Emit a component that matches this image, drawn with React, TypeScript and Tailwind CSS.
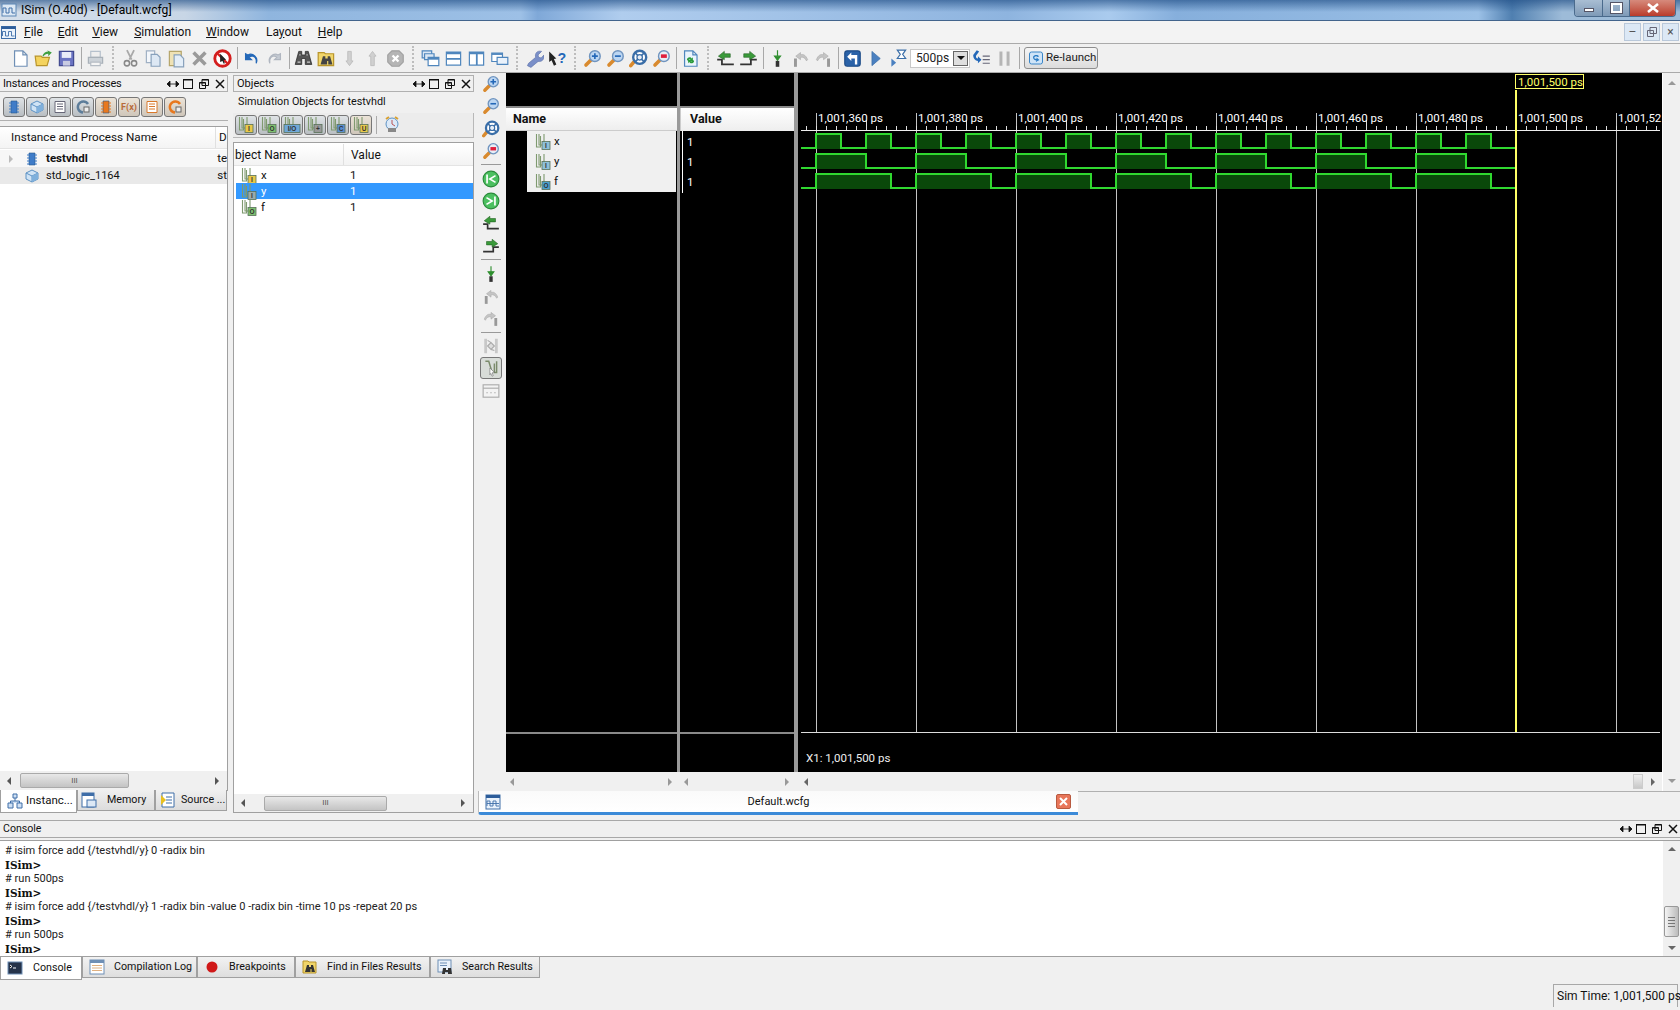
import React from "react";

const FONT = "Roboto, sans-serif";

const Svg = ({ children, w = 16, h = 16 }: { children: React.ReactNode; w?: number; h?: number }) => (
  <svg width={w} height={h} viewBox={`0 0 ${w} ${h}`} className="shrink-0 block">{children}</svg>
);

const Doc = ({ s = "#6f8fb5", f = "#fff" }: { s?: string; f?: string }) => <path d="M3 1.500h7l3.500 3.500v9.500H3z M10 1.500V5h3.500" fill={f} stroke={s} />;
const Lens = ({ mark, lens = "#bcd6f2" }: { mark?: React.ReactNode; lens?: string }) => (
  <Svg>
    <path d="M6.500 9.500L2.500 13.500" stroke="#d98a2e" strokeWidth="3" strokeLinecap="round" />
    <circle cx="10" cy="6" r="4.500" fill={lens} stroke="#6f94bf" strokeWidth="1.200" />
    {mark}
  </Svg>
);
const Buoy = () => (
  <Svg>
    <path d="M4 11l-2.500 3" stroke="#d98a2e" strokeWidth="3" strokeLinecap="round" />
    <circle cx="9" cy="7" r="5.500" fill="#fff" stroke="#3a6ea8" strokeWidth="2" />
    <circle cx="9" cy="7" r="2.300" fill="#e8eef6" stroke="#3a6ea8" />
    <path d="M5 3l2.500 2.500M13 3l-2.500 2.500M5 11l2.500-2.500M13 11l-2.500-2.500" stroke="#3a6ea8" strokeWidth="1.400" />
  </Svg>
);
const Arrow = ({ up }: { up?: boolean }) => (
  <Svg><path d={up ? "M8 2l3 4H9.500v8h-3V6H5z" : "M8 14l3-4H9.500V2h-3v8H5z"} fill="#d0d0d0" stroke="#b5b5b5" strokeWidth=".6" /></Svg>
);
const Win = ({ d }: { d: string }) => (
  <Svg><path d="M2 2.500h12v11H2z" fill="#fff" stroke="#4f86bd" /><path d={d} fill="#4f86bd" /></Svg>
);
const Step = ({ flip }: { flip?: boolean }) => (
  <Svg>
    <path d={flip ? "M1 13h9V9h5" : "M1 9h4v4h10"} fill="none" stroke="#333" strokeWidth="1.500" />
    <path d={flip ? "M14 6L9 2v2H4v3h5v2z" : "M2 6l5-4v2h5v3H7v2z"} fill="#3a9a3a" stroke="#206020" strokeWidth=".5" />
  </Svg>
);
const GrayArc = ({ flip }: { flip?: boolean }) => (
  <Svg>
    <g transform={flip ? "translate(16 0) scale(-1 1)" : undefined}>
      <path d="M2.500 8h2.500v7H2.500z" fill="#999" />
      <path d="M14 9C12.500 5 10 4 8 5V3L4 6l4 3V7c2-.5 4 .5 5 3z" fill="#c4c4c4" stroke="#aaa" strokeWidth=".5" />
    </g>
  </Svg>
);
const Binoc = () => (
  <Svg>
    <path d="M4 2h2.500v3h3V2H12l3 11h-5.500V8h-3v5H1z" fill="#555" stroke="#222" strokeWidth=".6" />
    <path d="M3 11h2.500M11 11h2.500M4.500 5h1M10.500 5h1" stroke="#ccc" />
  </Svg>
);
const Wrench = () => (
  <Svg><path d="M2 14l1-2 6-5c-1-3 1-6 5-5l-3 3 .5 2 2 .5 2.500-2.500c.5 4-2 6-5 5.500l-6 5z" fill="#7a8fc8" stroke="#5c70a8" strokeWidth=".5" /></Svg>
);

const SigIcon = ({ l, c, t = "#333", wide }: { l: string; c: string; t?: string; wide?: boolean }) => (
  <svg width="18" height="18" viewBox="0 0 18 18" className="shrink-0 block">
    <path d="M2.500 1v13h4V3M5 1v11h3M10 1v9" fill="none" stroke="#7f9a6f" strokeWidth="1.100" />
    <rect x={wide ? 1 : 8} y="8.500" width={wide ? 16 : 8} height="8" fill={c} stroke="#587058" strokeWidth=".8" />
    <text x={wide ? 9 : 12} y="15.200" textAnchor="middle" fontSize="6.500" fontWeight="700" fill={t} fontFamily="Liberation Sans, sans-serif">{l}</text>
  </svg>
);

const Tri = ({ dir, c = "#555" }: { dir: "l" | "r" | "u" | "d"; c?: string }) => {
  const d = { l: "M6 1v8L2 5z", r: "M3 1v8l4-4z", u: "M1 7h8L5 3z", d: "M1 3h8L5 7z" }[dir];
  return <svg width="10" height="10" viewBox="0 0 10 10" className="shrink-0 block"><path d={d} fill={c} /></svg>;
};

const WaveGlyph = () => (
  <Svg>
    <rect x="1" y="1" width="14" height="14" fill="#eaf2fb" stroke="#3f6ea8" />
    <rect x="1" y="1" width="14" height="3" fill="#2d5d9a" />
    <path d="M2 12V7h3v5h3V7h3v5h3M2 9.500h12" fill="none" stroke="#3f6ea8" strokeWidth=".9" />
  </Svg>
);

const Grip = () => (
  <div className="w-[12px] h-[24px] flex justify-center shrink-0">
    <div className="w-[2px] h-full border-l-2 border-dotted border-[#bdbdbd]" />
  </div>
);
const Sep = () => (
  <div className="w-[6px] h-[22px] flex justify-center shrink-0">
    <div className="w-px h-full bg-[#a8a8a8]" />
  </div>
);
const T = ({ children }: { children?: React.ReactNode }) => (
  <div className="w-[23px] h-[24px] flex items-center justify-center shrink-0 [&>svg]:w-[19px] [&>svg]:h-[19px]">{children}</div>
);

const Toolbar = () => (
  <div className="h-[28px] flex items-center pl-[9px] bg-[#f0f0f0] border-b border-[#aaaaaa] box-content">
    <T><Svg><Doc /></Svg></T>
    <T><Svg><path d="M1 6h5l1 1h6l-2 7H2z" fill="#f4d35e" stroke="#b8942a" /><path d="M7 6c1-3 3-4 5-4l-1-1 4 2-3 3V4c-2 0-3 1-4 2z" fill="#3f9e3f" /></Svg></T>
    <T><Svg><path d="M2 2h12v12H2z" fill="#6a73c2" stroke="#41498f" /><path d="M4 2.500h8v5H4z" fill="#e9ecf8" /><path d="M5 10h6v4H5z" fill="#c8cbe2" /></Svg></T>
    <Sep />
    <T><Svg><path d="M4 2h8v5H4z" fill="#eee" stroke="#b5c0cc" /><path d="M2 7h12v5H2z" fill="#ccd2d8" stroke="#a8b0b8" /><path d="M4 11h8v3H4z" fill="#f5f5f5" stroke="#b5bcc4" /></Svg></T>
    <Grip />
    <T><Svg><path d="M5 1l4 8M11 1L7 9" stroke="#a9a9a9" strokeWidth="1.500" /><circle cx="5" cy="12" r="2.200" fill="none" stroke="#888" strokeWidth="1.300" /><circle cx="11" cy="12" r="2.200" fill="none" stroke="#888" strokeWidth="1.300" /></Svg></T>
    <T><Svg><path d="M2 1.500h7v10H2z" fill="#f4f7fb" stroke="#9fb0c4" /><path d="M6 4.500h5l2.500 2.500v7.500H6z" fill="#dde8f4" stroke="#88a1bc" /></Svg></T>
    <T><Svg><path d="M2 2h10v12H2z" fill="#efe2b5" stroke="#b5a56a" /><path d="M6 5h5l3 3v7H6z" fill="#e4eef8" stroke="#88a1bc" /></Svg></T>
    <T><Svg><path d="M3 3l10 10M13 3L3 13" stroke="#9a9a9a" strokeWidth="3" /></Svg></T>
    <T><Svg><circle cx="8" cy="8" r="6.500" fill="#fff" stroke="#d41e1e" strokeWidth="2.400" /><path d="M4 4l8 8" stroke="#d41e1e" strokeWidth="2" /><path d="M6 4l5 5-2 .5 1 2.500-1 .5-1-2.500-2 1z" fill="#222" /></Svg></T>
    <Sep />
    <T><Svg><path d="M3 4v5h5L6 7c2-2 5-1 6 2v3c2-5-3-9-7-7z" fill="#2468b8" stroke="#2468b8" /></Svg></T>
    <T><Svg><path d="M13 4v5H8l2-2c-2-2-5-1-6 2v3c-2-5 3-9 7-7z" fill="#c4cad2" stroke="#b0b6c0" /></Svg></T>
    <Sep />
    <T><Binoc /></T>
    <T><Svg><path d="M1 3h5l1 1h7v10H1z" fill="#f0d56a" stroke="#b8942a" /><path d="M5 6h2v2h2V6h2l2 7h-3.500V10h-1v3H3z" fill="#444" /></Svg></T>
    <T><Arrow /></T>
    <T><Arrow up /></T>
    <T><Svg><path d="M5 1.500h6L14.500 5v6L11 14.500H5L1.500 11V5z" fill="#b5b5b5" stroke="#a0a0a0" /><path d="M5.500 5.500l5 5M10.500 5.500l-5 5" stroke="#fff" strokeWidth="2" /></Svg></T>
    <Grip />
    <T><Svg><path d="M1 1.500h8v6H1z" fill="#dbe7f4" stroke="#4f86bd" /><path d="M3 4h8v5H3z" fill="#dbe7f4" stroke="#4f86bd" /><path d="M6 7h9v7H6z" fill="#fff" stroke="#4f86bd" /><path d="M6 7h9v2H6z" fill="#4f86bd" /></Svg></T>
    <T><Win d="M2 7.500h12v1.500H2zM2 2.500h12v2H2z" /></T>
    <T><Win d="M7.500 2.500H9v11H7.500zM2 2.500h12v2H2z" /></T>
    <T><Svg><path d="M1.500 3.500h9v7h-9z" fill="#fff" stroke="#4f86bd" /><path d="M6 7h9v6H6z" fill="#eaf2fb" stroke="#4f86bd" /><path d="M1.500 3.500h9v1.500h-9z" fill="#4f86bd" /></Svg></T>
    <Grip />
    <T><Wrench /></T>
    <T><Svg><path d="M1 2l6 6-2 .5 2 4.500-2 1-2-4.500-2 1.500z" fill="#222" /><text x="8" y="12" fontSize="12" fontWeight="700" fill="#2468b8" fontFamily="Liberation Sans, sans-serif">?</text></Svg></T>
    <Grip />
    <T><Lens mark={<path d="M7.500 6h5M10 3.500v5" stroke="#2468b8" strokeWidth="1.400" />} /></T>
    <T><Lens mark={<path d="M7.500 6h5" stroke="#2468b8" strokeWidth="1.400" />} /></T>
    <T><Buoy /></T>
    <T><Lens lens="#e8eef6" mark={<path d="M7.500 4.500h5v3h-5z" fill="#e01e3c" />} /></T>
    <Sep />
    <T><Svg><Doc s="#4f86bd" f="#eaf4fc" /><path d="M5 9c0-2 3-3 4-1l1-1v3H7l1-1c-.5-.8-2-.4-2 1zM11 10c0 2-3 3-4 1l-1 1V9h3l-1 1c.5.8 2 .4 2-1z" fill="#2a9a3a" /></Svg></T>
    <Grip />
    <T><Step /></T>
    <T><Step flip /></T>
    <Sep />
    <T><Svg><path d="M8 1v5h2.500L8 9.500 5.500 6H8z" fill="#2f8f2f" stroke="#2f8f2f" /><path d="M6.500 10h3v5h-3z" fill="#333" /></Svg></T>
    <T><GrayArc /></T>
    <T><GrayArc flip /></T>
    <Sep />
    <T><Svg><rect x="1.500" y="1.500" width="13" height="13" rx="2" fill="#2a62a8" stroke="#1f4d88" /><path d="M11 5H7V3L3.500 6.500 7 10V8h3v5h2V5z" fill="#fff" /></Svg></T>
    <T><Svg><path d="M5 2l7 6-7 6z" fill="#4a80c0" stroke="#3a6ea8" strokeWidth=".6" /></Svg></T>
    <T><Svg><path d="M2 8l4 3.500L2 15z" fill="#4a80c0" /><path d="M7 1h7l-2.500 3.500L14 8H7l2.500-3.500z" fill="#fff" stroke="#3a6ea8" /></Svg></T>
    <div className="w-[60px] h-[19px] bg-white border border-[#c8c8c8] flex items-center justify-between pl-[5px] pr-px shrink-0 text-[12px] text-[#222]">
      500ps
      <span className="w-[15px] h-[15px] bg-[#dedede] border border-[#666] flex items-center justify-center"><Tri dir="d" c="#111" /></span>
    </div>
    <T><Svg><path d="M4 1L1 5c0 3 2 5 4 5v2l3-3-3-3v2C3.500 8 3 6.500 3.500 5.500L6 2z" fill="#2468b8" /><path d="M9 6h6M9 9h6M9 12h6" stroke="#667" /></Svg></T>
    <T><Svg><path d="M5 2v12M11 2v12" stroke="#b5b5b5" strokeWidth="2.500" /></Svg></T>
    <Sep />
    <div className="ml-[2px] w-[74px] h-[22px] rounded-[3px] border border-[#8e8e8e] bg-linear-to-b from-[#f6f6f6] to-[#dcdcdc] flex items-center gap-[2px] pl-[3px] text-[11.5px] text-[#222] shrink-0">
      <Svg><rect x="1.500" y="2" width="13" height="12" rx="2" fill="#cfe4f7" stroke="#3a86c8" /><path d="M11 6.500c-1-2-5-2-6 .5 0 2 1.500 3.500 3.500 3.500l-1 1.500 4-2-3-2.500v1.500c-2 0-2.500-1-2-2 .7-1 2.500-1 3 0z" fill="#2a7cc4" /></Svg>
      Re-launch
    </div>
  </div>
);

const DockIcons = () => (
  <div className="flex items-center gap-[4px] pr-[2px] text-black">
    <svg width="12" height="10" viewBox="0 0 12 10" className="block"><path d="M0 5h12M0 5l3-3v6zM12 5L9 2v6z" stroke="#111" strokeWidth=".8" fill="#111" /></svg>
    <svg width="10" height="10" viewBox="0 0 10 10" className="block"><rect x=".5" y=".5" width="9" height="9" fill="none" stroke="#111" /><path d="M0 1h10" stroke="#111" /></svg>
    <svg width="10" height="10" viewBox="0 0 10 10" className="block ml-[2px]"><path d="M3 .5h6.500v6H3z M.5 3.500h6v6h-6z" fill="none" stroke="#111" /><path d="M.5 4h6M3 1h6.500" stroke="#111" /></svg>
    <svg width="10" height="10" viewBox="0 0 10 10" className="block ml-[2px]"><path d="M1 1l8 8M9 1L1 9" stroke="#111" strokeWidth="1.500" /></svg>
  </div>
);

const ToolBtn = ({ children, orange }: { children: React.ReactNode; orange?: boolean }) => (
  <div className={`w-[22px] h-[20px] shrink-0 rounded-[3px] border border-[#777] bg-linear-to-b flex items-center justify-center ${orange ? "from-[#ece4d8] to-[#cfc6ba]" : "from-[#dfe3e6] to-[#b9bec2]"}`}>
    {children}
  </div>
);

const Chip = ({ c = "#3f7cc8" }: { c?: string }) => (
  <Svg w={14} h={14}><path d="M4 1h6v12H4z" fill={c} stroke="#27598f" strokeWidth=".6" /><path d="M2 3h2M2 6h2M2 9h2M2 12h2M10 3h2M10 6h2M10 9h2M10 12h2" stroke={c} /></Svg>
);
const Cube = ({ s = 14 }: { s?: number }) => (
  <svg width={s} height={s} viewBox="0 0 14 14" className="shrink-0 block"><path d="M7 1l6 3v6l-6 3-6-3V4z" fill="#cfe3f5" stroke="#5d92c4" /><path d="M7 7l6-3M7 7v6M7 7L1 4" stroke="#5d92c4" /><path d="M7 7l6-3v6l-6 3z" fill="#7fb0dc" /></svg>
);
const ListI = ({ c = "#667" }: { c?: string }) => (
  <Svg w={14} h={14}><path d="M2 1.500h10v11H2z" fill="#fff" stroke={c} /><path d="M4 4h6M4 6.500h6M4 9h6" stroke={c} /></Svg>
);
const Refresh = ({ c = "#5d7d9a" }: { c?: string }) => (
  <Svg w={14} h={14}><path d="M12 4A5.500 5.500 0 1 0 7 12.500" fill="none" stroke={c} strokeWidth="2.500" /><rect x="8" y="7" width="5" height="5" fill="#eee" stroke="#666" /></Svg>
);

const VBtn = ({ children, active }: { children?: React.ReactNode; active?: boolean }) => (
  <div className={`w-[22px] h-[22.3px] shrink-0 flex items-center justify-center [&>svg]:w-[18px] [&>svg]:h-[18px] ${active ? "rounded-[3px] border border-[#777] bg-[#d8dcd8]" : ""}`}>{children}</div>
);
const VSep = () => <div className="w-[20px] h-px bg-[#999] my-[2.25px] ml-px shrink-0" />;

const ScrollArrowRow = ({ className }: { className: string }) => (
  <div className={`flex items-center justify-between ${className}`}>
    <Tri dir="l" c="#999" />
    <Tri dir="r" c="#999" />
  </div>
);

const Waves = () => {
  const starts = [816, 916, 1016, 1116, 1216, 1316, 1416];
  const signals: { hi: number; lo: number; on: [number, number][] }[] = [
    { hi: 134, lo: 148, on: [[0, 25], [50, 75]] },
    { hi: 154, lo: 168, on: [[0, 50]] },
    { hi: 174, lo: 188, on: [[0, 75]] },
  ];
  const ticks: number[] = [];
  for (let x = 806; x < 1660; x += 10) ticks.push(x);
  const majors = [...starts, 1516, 1616];
  const labels = ["1,001,360 ps", "1,001,380 ps", "1,001,400 ps", "1,001,420 ps", "1,001,440 ps", "1,001,460 ps", "1,001,480 ps", "1,001,500 ps"];
  return (
    <svg viewBox="798 73 864 699" width="864" height="699" className="block bg-black">
      {majors.map((x) => x !== 1516 && <line key={x} x1={x + 0.5} x2={x + 0.5} y1={113} y2={732} stroke="#c4c4c4" shapeRendering="crispEdges" />)}
      {ticks.map((x) => (
        <line key={x} x1={x + 0.5} x2={x + 0.5} y1={(x - 816) % 100 === 50 ? 120 : 126} y2={130} stroke="#ddd" shapeRendering="crispEdges" />
      ))}
      <line x1={801} x2={1660} y1={130.5} y2={130.5} stroke="#eee" shapeRendering="crispEdges" />
      <line x1={801} x2={1660} y1={732.5} y2={732.5} stroke="#ddd" shapeRendering="crispEdges" />
      {labels.map((t, i) => (
        <text key={t} x={818 + i * 100} y={122} fill="#fff" fontSize="11.500" fontFamily={FONT}>{t}</text>
      ))}
      <text x={1618} y={122} fill="#fff" fontSize="11.500" fontFamily={FONT}>1,001,52</text>
      {signals.map((s, k) => {
        let d = `M801 ${s.lo}`;
        const rects: React.ReactNode[] = [];
        starts.forEach((st) => {
          s.on.forEach(([a, b]) => {
            d += ` L${st + a} ${s.lo} L${st + a} ${s.hi} L${st + b} ${s.hi} L${st + b} ${s.lo}`;
            rects.push(<rect key={`${st}-${a}`} x={st + a} y={s.hi} width={b - a} height={s.lo - s.hi + 1} fill="#0a480a" />);
          });
        });
        d += ` L1516 ${s.lo}`;
        return (
          <g key={k}>
            {rects}
            <path d={d} fill="none" stroke="#30d830" strokeWidth="2" shapeRendering="crispEdges" />
          </g>
        );
      })}
      <rect x={1515} y={90} width={2} height={642} fill="#ffff66" />
      <rect x={1515.5} y={74.5} width={68} height={14} fill="#000" stroke="#ffff66" />
      <text x={1518} y={85.500} fill="#ffff66" fontSize="11.500" fontFamily={FONT}>1,001,500 ps</text>
      <text x={806} y={762} fill="#eee" fontSize="11.500" fontFamily={FONT}>X1: 1,001,500 ps</text>
    </svg>
  );
};

const consoleLines: [string, boolean][] = [
  ["# isim force add {/testvhdl/y} 0 -radix bin", false],
  ["ISim>", true],
  ["# run 500ps", false],
  ["ISim>", true],
  ["# isim force add {/testvhdl/y} 1 -radix bin -value 0 -radix bin -time 10 ps -repeat 20 ps", false],
  ["ISim>", true],
  ["# run 500ps", false],
  ["ISim>", true],
];

export default function App() {
  return (
    <div className="w-[1680px] h-[1010px] overflow-hidden flex flex-col bg-[#f0f0f0] font-['Roboto',sans-serif] text-[11.5px] text-[#111] leading-none whitespace-nowrap">
      {/* Title */}
      <div className="h-[21px] shrink-0 relative flex items-center border-b border-[#42648c] bg-[linear-gradient(180deg,rgba(30,76,132,.65),rgba(255,255,255,0)_60%),linear-gradient(90deg,#d5dfea_0,#c8d6e6_11%,#8fb5de_16%,#9dc0e6_31%,#7fa8d8_32%,#b0cdee_37%,#8eb4df_60%,#aacbee_66%,#86afdc_70%,#9bc0e6_88%,#4f7fb0_90%,#9dbbd8_93%,#9dbbd8_100%)]">
        <div className="w-[16px] h-[16px] ml-px"><Svg><rect x="1" y="2" width="14" height="12" fill="#dce8f4" stroke="#5b86b5" /><path d="M2 11V6h3v5h3V6h3v5h3" fill="none" stroke="#3f6ea8" /></Svg></div>
        <span className="ml-[4px] text-[12.1px] text-black">ISim (O.40d) - [Default.wcfg]</span>
        <div className="ml-auto mr-[4px] self-start flex h-[17px] rounded-b-[4px] border border-t-0 border-[#4a6a8c] overflow-hidden">
          <div className="w-[28px] bg-linear-to-b from-[#a9bed3] to-[#7f9ab7] flex items-center justify-center border-r border-[#4a6a8c]"><div className="w-[10px] h-[4px] bg-white border border-[#556] mt-[3px]" /></div>
          <div className="w-[27px] bg-linear-to-b from-[#a9bed3] to-[#7f9ab7] flex items-center justify-center border-r border-[#4a6a8c]"><div className="w-[11px] h-[10px] border-2 border-white shadow-[0_0_0_1px_#556]" /></div>
          <div className="w-[45px] bg-linear-to-b from-[#d68a7c] to-[#b93a2a] flex items-center justify-center"><svg width="12" height="10" viewBox="0 0 12 10" className="block"><path d="M1 1l10 8M11 1L1 9" stroke="#fff" strokeWidth="2.600" /></svg></div>
        </div>
      </div>
      {/* Menu */}
      <div className="h-[23px] shrink-0 relative flex items-center bg-[#f3f3f3] border-b border-[#aaaaaa] text-[12px]">
        <div className="w-[15px] h-[15px] ml-px"><Svg w={15} h={15}><rect x=".5" y="1.500" width="14" height="12" fill="#eaf2fb" stroke="#3f6ea8" /><rect x=".5" y="1.500" width="14" height="2.500" fill="#2d5d9a" /><path d="M1.500 11V6.500h3V11h3V6.500h3V11h3" fill="none" stroke="#3f6ea8" strokeWidth=".9" /></Svg></div>
        <span className="ml-[8px]"><u>F</u>ile</span>
        <span className="ml-[15px]"><u>E</u>dit</span>
        <span className="ml-[14px]"><u>V</u>iew</span>
        <span className="ml-[16px]"><u>S</u>imulation</span>
        <span className="ml-[15px]"><u>W</u>indow</span>
        <span className="ml-[17px]">La<u>y</u>out</span>
        <span className="ml-[16px]"><u>H</u>elp</span>
        <div className="ml-auto mr-px flex gap-[2px]">
          {["–", "", "×"].map((c, i) => (
            <div key={i} className="w-[17px] h-[18px] bg-[#dce8f5] border border-[#b9c8da] flex items-center justify-center text-[#555] text-[12px]">
              {i === 1 ? <svg width="10" height="10" viewBox="0 0 10 10" className="block"><path d="M3 .5h6.500v6H3zM.5 3.500h6v6h-6z" fill="none" stroke="#667" /></svg> : c}
            </div>
          ))}
        </div>
      </div>
      <Toolbar />

      {/* Main */}
      <div className="h-[748px] shrink-0 flex">
        {/* Left */}
        <div className="w-[228px] shrink-0 pt-[2px] flex flex-col h-[740px]">
          <div className="h-[17px] flex items-center justify-between pl-[3px] border border-l-0 border-[#b0b0b0] bg-[#f0f0f0] text-[11px] tracking-[-0.18px]">
            <span>Instances and Processes</span><DockIcons />
          </div>
          <div className="h-[27px] mt-[2px] flex items-center gap-px pl-[3px] border-b border-[#b0b0b0]">
            <ToolBtn><Chip /></ToolBtn>
            <ToolBtn><Cube /></ToolBtn>
            <ToolBtn><ListI /></ToolBtn>
            <ToolBtn><Refresh /></ToolBtn>
            <ToolBtn orange><Chip c="#e8781e" /></ToolBtn>
            <ToolBtn orange><span className="text-[9px] font-bold text-[#b86a3a]">F(x)</span></ToolBtn>
            <ToolBtn orange><ListI c="#d9782a" /></ToolBtn>
            <ToolBtn orange><Refresh c="#e8781e" /></ToolBtn>
          </div>
          <div className="mt-[5px] flex-1 border border-l-0 border-[#a0a0a0] bg-white flex flex-col overflow-hidden">
            <div className="h-[22px] flex items-center border-b border-[#e4e4e4] bg-linear-to-b from-white to-[#f4f4f4] shrink-0 text-[11.7px]">
              <span className="w-[216px] pl-[11px] border-r border-[#e0e0e0] h-full flex items-center">Instance and Process Name</span>
              <span className="pl-[3px]">D</span>
            </div>
            <div className="mt-[1px] h-[17px] flex items-center bg-[#f7f7f7] shrink-0">
              <span className="ml-[6px]"><Tri dir="r" c="#bbb" /></span>
              <span className="ml-[9px]"><Chip /></span>
              <span className="ml-[7px] w-[172px] font-bold">testvhdl</span>
              <span>te</span>
            </div>
            <div className="h-[17px] flex items-center bg-[#e9e9e9] shrink-0">
              <span className="ml-[25px]"><Cube /></span>
              <span className="ml-[7px] w-[172px] text-[11px]">std_logic_1164</span>
              <span>st</span>
            </div>
            <div className="flex-1" />
            <div className="h-[19px] bg-[#f0f0f0] flex items-center px-[5px] shrink-0">
              <Tri dir="l" />
              <div className="ml-[5px] w-[109px] h-[15px] rounded-[2px] border border-[#aaa] bg-linear-to-b from-[#e8e8e8] to-[#c4c4c4] flex items-center justify-center text-[8px] text-[#555]">III</div>
              <div className="flex-1" />
              <Tri dir="r" />
            </div>
          </div>
          <div className="h-[23px] flex items-start shrink-0 -mt-px">
            <div className="w-[77px] h-[23px] bg-white border border-t-0 border-[#a0a0a0] flex items-center pl-[6px] gap-[3px] relative z-10">
              <Svg><path d="M6 1h4v4H6zM1 10h5v5H1zM10 10h5v5h-5zM8 5v3M3.500 10V8h9v2" fill="#cfe0f4" stroke="#3f6ea8" /></Svg>
              Instanc...
            </div>
            <div className="w-[78px] h-[21px] bg-linear-to-b from-[#f0f0f0] to-[#dcdcdc] border border-t-0 border-[#a0a0a0] flex items-center pl-[3px] gap-[10px] text-[10.7px]">
              <Svg><rect x="1" y="1" width="12" height="14" fill="#fff" stroke="#3f6ea8" /><rect x="1" y="1" width="12" height="3" fill="#3f6ea8" /><rect x="6" y="8" width="9" height="7" fill="#dce8f5" stroke="#3f6ea8" /></Svg>
              Memory
            </div>
            <div className="w-[72px] h-[21px] bg-linear-to-b from-[#f0f0f0] to-[#dcdcdc] border border-t-0 border-[#a0a0a0] flex items-center pl-[4px] gap-[5px] overflow-hidden text-[10.7px]">
              <Svg><path d="M2 1h12v14H2z" fill="#fff" stroke="#3f6ea8" /><path d="M6 5h6M6 8h6M6 11h6" stroke="#3f6ea8" /><path d="M1 3l5 5-5 5z" fill="#e8c020" /></Svg>
              Source ...
            </div>
          </div>
        </div>

        {/* Objects */}
        <div className="ml-[5px] w-[241px] shrink-0 pt-[2px] h-[740px] flex flex-col">
          <div className="h-[17px] flex items-center justify-between pl-[3px] border border-[#b0b0b0] shrink-0 text-[11px]">
            <span>Objects</span><DockIcons />
          </div>
          <div className="h-[21px] pl-[5px] flex items-center shrink-0 text-[10.8px]">Simulation Objects for testvhdl</div>
          <div className="h-[25px] flex items-center gap-px pl-[2px] shrink-0 border-b border-r border-[#b8b8b8] bg-[#ececec]">
            {[
              <SigIcon key="a" l="I" c="#e8c84a" />, <SigIcon key="b" l="O" c="#7fc070" />, <SigIcon key="c" l="I/O" c="#6fa8d8" wide />,
              <SigIcon key="d" l="+" c="#999" />, <SigIcon key="e" l="C" c="#5a8ed0" />, <SigIcon key="f" l="U" c="#e8c84a" />,
            ].map((ic, i) => <ToolBtn key={i} orange={i === 5}>{ic}</ToolBtn>)}
            <div className="w-px h-[18px] bg-[#aaa] ml-[3px]" />
            <span className="ml-[5px]"><Svg w={18} h={18}><circle cx="9" cy="8" r="6" fill="#dbe9f8" stroke="#5d92c4" /><path d="M9 4v4l3 2" stroke="#b55" fill="none" /><path d="M3 3l3-2M15 3l-3-2" stroke="#d8a030" strokeWidth="2" /><rect x="5" y="12" width="8" height="4" fill="#888" /></Svg></span>
          </div>
          <div className="mt-[4px] flex-1 border border-[#a0a0a0] bg-white flex flex-col overflow-hidden">
            <div className="h-[22px] mt-px flex items-center border-b border-[#e4e4e4] bg-linear-to-b from-white to-[#f3f3f3] shrink-0 text-[12px]">
              <span className="w-[110px] pl-px border-r border-[#e0e0e0] h-full flex items-center">bject Name</span>
              <span className="pl-[7px]">Value</span>
            </div>
            <div className="pt-[1px] pl-[2px] flex flex-col shrink-0">
              {[
                { n: "x", l: "I", c: "#e8c84a" },
                { n: "y", l: "I", c: "#9aa", sel: true },
                { n: "f", l: "O", c: "#7fc070" },
              ].map((r) => (
                <div key={r.n} className={`h-[16px] pt-[2px] flex items-center ${r.sel ? "bg-[#3399ff] text-white" : ""}`}>
                  <span className="ml-[4px]"><SigIcon l={r.l} c={r.c} /></span>
                  <span className="ml-[3px] w-[89px]">{r.n}</span>
                  <span>1</span>
                </div>
              ))}
            </div>
            <div className="flex-1" />
            <div className="h-[18px] bg-[#f0f0f0] flex items-center px-[5px] shrink-0">
              <Tri dir="l" />
              <div className="ml-[15px] w-[123px] h-[15px] rounded-[2px] border border-[#aaa] bg-linear-to-b from-[#e8e8e8] to-[#c4c4c4] flex items-center justify-center text-[8px] text-[#555]">III</div>
              <div className="flex-1" />
              <Tri dir="r" />
            </div>
          </div>
        </div>

        {/* Right */}
        <div className="w-[1206px] shrink-0 flex flex-col">
          <div className="h-[718px] flex shrink-0">
            {/* Vertical toolbar */}
            <div className="w-[32px] shrink-0 pl-[6px] flex flex-col items-start">
              <VBtn><Lens mark={<path d="M7.500 6h5M10 3.500v5" stroke="#2468b8" strokeWidth="1.400" />} /></VBtn>
              <VBtn><Lens mark={<path d="M7.500 6h5" stroke="#2468b8" strokeWidth="1.400" />} /></VBtn>
              <VBtn><Buoy /></VBtn>
              <VBtn><Lens lens="#e8eef6" mark={<path d="M7.500 4.500h5v3h-5z" fill="#e01e3c" />} /></VBtn>
              <VSep />
              <VBtn><Svg><circle cx="8" cy="8" r="7" fill="#4cc060" stroke="#2a8a3a" /><path d="M4.500 4v8M12 5L7 8l5 3" stroke="#fff" strokeWidth="1.500" fill="none" /></Svg></VBtn>
              <VBtn><Svg><circle cx="8" cy="8" r="7" fill="#4cc060" stroke="#2a8a3a" /><path d="M11.500 4v8M4 5l5 3-5 3" stroke="#fff" strokeWidth="1.500" fill="none" /></Svg></VBtn>
              <VBtn><Step /></VBtn>
              <VBtn><Step flip /></VBtn>
              <VSep />
              <VBtn><Svg><path d="M8 1v5h2.500L8 9.500 5.500 6H8z" fill="#2f8f2f" stroke="#2f8f2f" /><path d="M6.500 10h3v5h-3z" fill="#333" /></Svg></VBtn>
              <VBtn><GrayArc /></VBtn>
              <VBtn><GrayArc flip /></VBtn>
              <VSep />
              <VBtn><Svg><path d="M2 1.500h2.500v13H2zM11.500 1.500H14v13h-2.500z" fill="#c8c8c8" /><path d="M5 8l3-3 3 3-3 3zM5 3l3 2M11 12l-3-1" stroke="#aaa" fill="#ddd" /></Svg></VBtn>
              <VBtn active><Svg><path d="M3 2h3l3 10M13 2v10h-2V4" fill="none" stroke="#7a8a6a" strokeWidth="1.300" /><path d="M7 8l4 4-2 .3 1 2.500-1 .5-1.200-2.500L7 14z" fill="#fff" stroke="#666" strokeWidth=".5" /></Svg></VBtn>
              <VBtn><Svg><rect x="1" y="2.500" width="14" height="11" fill="#f3f3f3" stroke="#aaa" /><path d="M1 5.500h14" stroke="#aaa" /><path d="M4 9.500h1M7.500 9.500h1M11 9.500h1" stroke="#999" /></Svg></VBtn>
            </div>
            {/* Wave panes */}
            <div className="flex-1 flex flex-col min-w-0">
              <div className="h-[699px] flex bg-[#9a9a9a] shrink-0">
                <div className="w-[171px] bg-black flex flex-col shrink-0">
                  <div className="h-[33px] border-b-2 border-[#8a8a8a] shrink-0 box-content" />
                  <div className="h-[23px] bg-linear-to-b from-white to-[#eeeeee] border-b border-[#ccc] pl-[7px] flex items-center font-bold text-[12.5px] text-[#111] shrink-0">Name</div>
                  <div className="ml-[21px] mr-px bg-[#f0f0f0] flex flex-col shrink-0 pt-px">
                    {[["x", "I", "#8ec0d8"], ["y", "I", "#8ec0d8"], ["f", "O", "#4aa0d0"]].map(([n, l, c]) => (
                      <div key={n} className="h-[20px] flex items-center pl-[7px] gap-[2px]">
                        <SigIcon l={l} c={c} /><span>{n}</span>
                      </div>
                    ))}
                  </div>
                  <div className="flex-1" />
                  <div className="h-[40px] border-t-2 border-[#8a8a8a] shrink-0" />
                </div>
                <div className="w-[114px] ml-[3px] bg-black flex flex-col shrink-0">
                  <div className="h-[33px] border-b-2 border-[#8a8a8a] shrink-0 box-content" />
                  <div className="h-[23px] bg-linear-to-b from-white to-[#eeeeee] border-l border-[#ccc] pl-[9px] flex items-center font-bold text-[12.5px] text-[#111] shrink-0">Value</div>
                  <div className="ml-[2px] border-l border-white flex flex-col shrink-0 pt-[2px] text-white">
                    {["1", "1", "1"].map((v, i) => <div key={i} className="h-[20px] pl-[4px] flex items-center">{v}</div>)}
                  </div>
                  <div className="flex-1" />
                  <div className="h-[40px] border-t-2 border-[#8a8a8a] shrink-0" />
                </div>
                <div className="ml-[4px] shrink-0"><Waves /></div>
              </div>
              <div className="h-[19px] flex shrink-0">
                <ScrollArrowRow className="w-[171px] px-[2px]" />
                <ScrollArrowRow className="w-[114px] ml-[3px] px-[2px]" />
                <div className="ml-[4px] w-[864px] flex items-center px-[4px]">
                  <Tri dir="l" c="#666" />
                  <div className="flex-1" />
                  <div className="w-[10px] h-[15px] border border-[#ccc] bg-linear-to-b from-[#f0f0f0] to-[#c8c8c8] mr-[5px]" />
                  <Tri dir="r" c="#666" />
                </div>
              </div>
            </div>
            {/* Right scrollbar */}
            <div className="w-[18px] shrink-0 flex flex-col items-center justify-between py-[5px] border-l border-white">
              <Tri dir="u" c="#999" />
              <Tri dir="d" c="#999" />
            </div>
          </div>
          {/* Doc tab strip */}
          <div className="h-[24px] flex items-start shrink-0">
            <div className="ml-[4px] w-[600px] h-[24px] border-l border-[#bbb] relative flex items-center justify-center bg-linear-to-b from-[#fafafa] to-white border-b-[3px] border-b-[#3b8ad8] rounded-bl-[3px] shrink-0 text-[11px]">
              <span className="absolute left-[6px] top-[3px]"><WaveGlyph /></span>
              Default.wcfg
              <span className="absolute right-[7px] top-[3px] w-[15px] h-[15px] rounded-[2px] bg-[#e8765a] border border-[#b85a40] flex items-center justify-center">
                <svg width="9" height="9" viewBox="0 0 9 9" className="block"><path d="M1 1l7 7M8 1L1 8" stroke="#fff" strokeWidth="2" /></svg>
              </span>
            </div>
            <div className="flex-1 border-t border-[#b0b0b0]" />
          </div>
        </div>
      </div>

      {/* Console */}
      <div className="h-[18px] shrink-0 mt-[-1px] flex items-center justify-between pl-[3px] border-y border-[#a8a8a8] text-[10.6px]">
        <span>Console</span><DockIcons />
      </div>
      <div className="h-[117px] shrink-0 mt-[2px] flex bg-white border-y border-[#a0a0a0]">
        <div className="flex-1 pl-[5px] pt-[3px] text-[11.05px] text-[#222]">
          {consoleLines.map(([t, b], i) => (
            <div key={i} className={`h-[14px] flex items-center ${b ? "font-bold font-['DejaVu_Serif',serif] text-[#111] text-[10.5px]" : ""}`}>{t}</div>
          ))}
        </div>
        <div className="w-[17px] bg-[#f0f0f0] flex flex-col items-center justify-between py-[3px] shrink-0">
          <Tri dir="u" c="#666" />
          <div className="flex-1" />
          <div className="w-[15px] h-[31px] mb-[6px] rounded-[2px] border border-[#999] bg-linear-to-r from-[#f4f4f4] to-[#bcbcbc] flex flex-col items-center justify-center gap-[2px]">
            <div className="w-[7px] h-px bg-[#777]" /><div className="w-[7px] h-px bg-[#777]" /><div className="w-[7px] h-px bg-[#777]" /><div className="w-[7px] h-px bg-[#777]" />
          </div>
          <Tri dir="d" c="#666" />
        </div>
      </div>
      {/* Bottom tabs */}
      <div className="h-[23px] shrink-0 flex items-start text-[10.7px]">
        {[
          { t: "Console", w: 82, gap: 10, active: true, ic: <Svg><rect x="1" y="2" width="14" height="12" fill="#25334a" stroke="#6f8fb5" /><path d="M3 5l2 1.500L3 8M6 8h3" stroke="#fff" /></Svg> },
          { t: "Compilation Log", w: 115, gap: 9, ic: <Svg><rect x="1" y="1" width="14" height="14" fill="#fff" stroke="#6f8fb5" /><rect x="1" y="1" width="14" height="3" fill="#6f8fb5" /><path d="M3 6.500h10M3 9h10M3 11.500h10" stroke="#e0b080" /></Svg> },
          { t: "Breakpoints", w: 98, gap: 9, ic: <Svg><circle cx="8" cy="8" r="5.500" fill="#d01818" /></Svg> },
          { t: "Find in Files Results", w: 135, gap: 9, ic: <Svg><path d="M1 2h5l1 1h7v11H1z" fill="#f0d56a" stroke="#b8942a" /><path d="M5 6h2v2h2V6h2l2 7h-3.500V10h-1v3H3z" fill="#333" /></Svg> },
          { t: "Search Results", w: 110, gap: 9, ic: <Svg><rect x="1" y="1" width="13" height="12" fill="#eaf2fb" stroke="#6f8fb5" /><path d="M3 4h7M3 6.500h7" stroke="#6f8fb5" /><path d="M6 9h3v2h2V9h3l1 6h-4v-2H8v2H5z" fill="#333" /></Svg> },
        ].map((x) => (
          <div
            key={x.t}
            style={{ width: x.w, columnGap: x.gap }}
            className={`shrink-0 border-x border-b border-[#a0a0a0] flex items-center pl-[6px] ${x.active ? "h-[23px] bg-white" : "h-[21px] bg-linear-to-b from-[#f2f2f2] to-[#dedede]"}`}
          >
            {x.ic}<span>{x.t}</span>
          </div>
        ))}
      </div>
      {/* Status */}
      <div className="h-[30px] shrink-0 flex justify-end items-start pr-[2px] pt-[4px]">
        <div className="w-[125px] h-[23px] border-l border-t border-r border-[#a8a8a8] flex items-center pl-[3px] text-[12px]">Sim Time: 1,001,500 ps</div>
      </div>
    </div>
  );
}
